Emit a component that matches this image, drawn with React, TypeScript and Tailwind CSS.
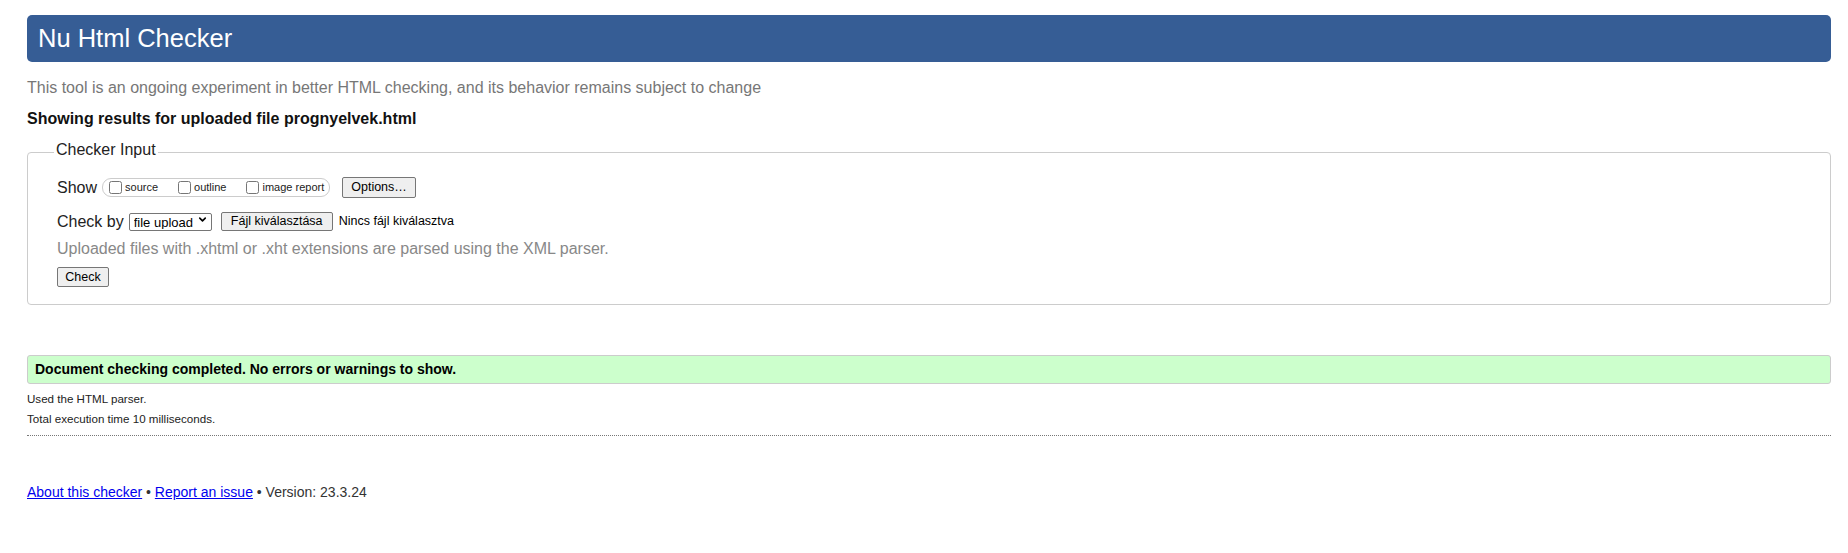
import { ChevronDown } from "lucide-react";

function Box({ label }: { label: string }) {
  return (
    <label className="flex items-center gap-[3px]">
      <input type="checkbox" className="m-0 h-[13px] w-[13px]" />
      <span className="text-[11px] leading-[13px] text-[#222]">{label}</span>
    </label>
  );
}

const btn =
  "rounded-[2px] border border-[#767676] bg-[#efefef] text-[12.5px] leading-none text-black";

export default function App() {
  return (
    <div className="min-h-screen bg-white pl-[27px] pr-[17px] pt-[15px] font-['Liberation_Sans',Arial,sans-serif] text-[16px] text-[#222]">
      <h1 className="flex h-[47px] items-center rounded-[5px] bg-[#365d95] pl-[11px] text-[25.5px] font-normal text-white">
        Nu Html Checker
      </h1>

      <p className="mt-[17px] leading-[18px] text-[#777]">
        This tool is an ongoing experiment in better HTML checking, and its behavior remains subject to change
      </p>
      <p className="mt-[13px] font-bold leading-[18px] text-[#111]">
        Showing results for uploaded file prognyelvek.html
      </p>

      {/* the input form */}
      <fieldset className="mt-[12.5px] rounded-[4px] border border-[#ccc] pb-[16px] pl-[26px]">
        <legend className="px-[2px] pb-[6.5px] leading-[18px] text-[#222]">Checker Input</legend>
        <div className="pl-[3px]">
          <div className="mt-[12px] flex h-[21px] items-center">
            <span className="leading-[18px]">Show</span>
            <div className="ml-[5px] flex h-[19px] w-[228px] items-center gap-[20px] rounded-[9px] border border-[#ccc] pl-[6px]">
              <Box label="source" />
              <Box label="outline" />
              <Box label="image report" />
            </div>
            <button className={`${btn} ml-[12px] h-[21px] w-[74px]`}>Options…</button>
          </div>

          <div className="mt-[14px] flex h-[19px] items-center">
            <span className="leading-[18px]">Check by</span>
            <div className="relative ml-[5px]">
              <select className="h-[18px] w-[83px] appearance-none rounded-[2px] border border-[#767676] bg-white pl-[4px] text-[13px] leading-none text-black">
                <option>file upload</option>
              </select>
              <ChevronDown
                className="pointer-events-none absolute right-[4px] top-[4px] h-[11px] w-[11px] text-black"
                strokeWidth={3.5}
              />
            </div>
            <button className={`${btn} ml-[9px] h-[19px] w-[112px]`}>Fájl kiválasztása</button>
            <span className="ml-[6px] text-[12.5px] text-black">Nincs fájl kiválasztva</span>
          </div>

          <p className="mt-[8.5px] leading-[18px] text-[#888]">
            Uploaded files with .xhtml or .xht extensions are parsed using the XML parser.
          </p>

          <button className={`${btn} mt-[9.5px] h-[20px] w-[52px]`}>Check</button>
        </div>
      </fieldset>

      {/* result */}
      <div className="mt-[50px] flex h-[29px] items-center rounded-[3px] border border-[#ccc] bg-[#ccffcc] pl-[7px] text-[14px] font-bold text-black">
        Document checking completed. No errors or warnings to show.
      </div>
      <p className="mt-[8px] text-[11.6px] leading-[14px] text-[#222]">Used the HTML parser.</p>
      <p className="mt-[6px] text-[11.6px] leading-[14px] text-[#222]">Total execution time 10 milliseconds.</p>
      <div className="mt-[9px] border-t border-dotted border-[#777]" />

      <p className="mt-[48px] text-[14px] leading-[16px] text-[#333]">
        <a href="#" className="text-[#0000ee] underline">About this checker</a>
        {" • "}
        <a href="#" className="text-[#0000ee] underline">Report an issue</a>
        {" • Version: 23.3.24"}
      </p>
    </div>
  );
}
